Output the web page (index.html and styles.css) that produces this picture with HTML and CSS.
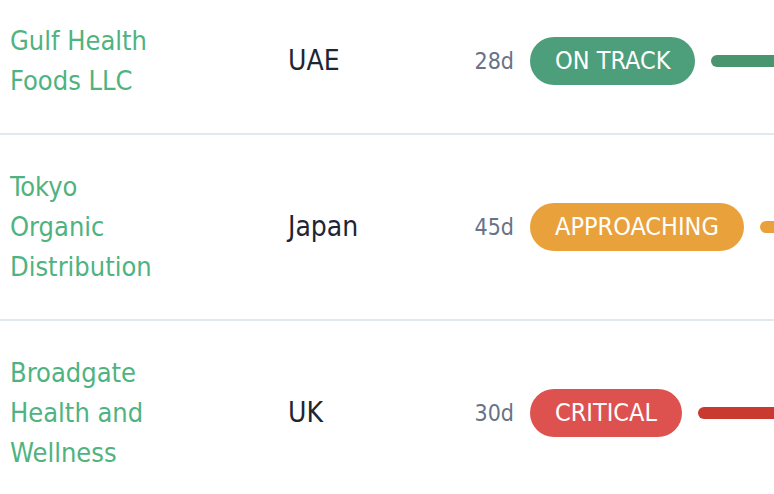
FILE: index.html
```html
<!DOCTYPE html>
<html lang="en">
<head>
<meta charset="utf-8">
<title>Partners</title>
<link rel="stylesheet" href="styles.css">
</head>
<body>
<div class="table">
  <div class="row">
    <div class="cell name"><span class="name-text">Gulf Health Foods LLC</span></div>
    <div class="cell country">UAE</div>
    <div class="cell days">28d</div>
    <div class="cell status">
      <span class="badge badge-green">ON TRACK</span>
      <span class="bar bar-green"></span>
    </div>
  </div>
  <div class="row">
    <div class="cell name"><span class="name-text">Tokyo Organic Distribution</span></div>
    <div class="cell country">Japan</div>
    <div class="cell days">45d</div>
    <div class="cell status">
      <span class="badge badge-orange">APPROACHING</span>
      <span class="bar bar-orange"></span>
    </div>
  </div>
  <div class="row">
    <div class="cell name"><span class="name-text">Broadgate Health and Wellness</span></div>
    <div class="cell country">UK</div>
    <div class="cell days">30d</div>
    <div class="cell status">
      <span class="badge badge-red">CRITICAL</span>
      <span class="bar bar-red"></span>
    </div>
  </div>
</div>
</body>
</html>
```

FILE: styles.css
```css
html, body {
  margin: 0;
  padding: 0;
  background: #ffffff;
  overflow: hidden;
}
body {
  font-family: "DejaVu Sans Condensed", "DejaVu Sans", Verdana, sans-serif;
  font-stretch: condensed;
  width: 774px;
  height: 494px;
}
.table {
  margin-top: -11px;
  width: 774px;
}
.row {
  display: flex;
  align-items: center;
  border-bottom: 2px solid #e2e8f0;
  overflow: hidden;
}
.cell {
  padding: 32px 0;
  flex-shrink: 0;
}
.name {
  width: 288px;
  padding-left: 10px;
  box-sizing: border-box;
  font-size: 27px;
  line-height: 40px;
  color: #4fb37f;
}
.name-text {
  display: block;
  width: 160px;
}
.country {
  width: 160px;
  font-size: 28px;
  line-height: 40px;
  color: #1e2533;
}
.days {
  width: 66px;
  text-align: right;
  font-size: 23px;
  color: #667389;
}
.status {
  display: flex;
  align-items: center;
  gap: 16px;
  margin-left: 16px;
}
.badge {
  display: inline-block;
  height: 48px;
  line-height: 48px;
  padding: 0 25px;
  border-radius: 24px;
  font-size: 25px;
  color: #ffffff;
  white-space: nowrap;
}
.badge-green { background: #4c9f7a; }
.badge-orange { background: #e9a23b; }
.badge-red { background: #dd524f; }
.bar {
  display: block;
  width: 200px;
  height: 12px;
  border-radius: 6px;
}
.bar-green { background: #48956f; }
.bar-orange { background: #e9a23b; }
.bar-red { background: #c9392f; }
```
